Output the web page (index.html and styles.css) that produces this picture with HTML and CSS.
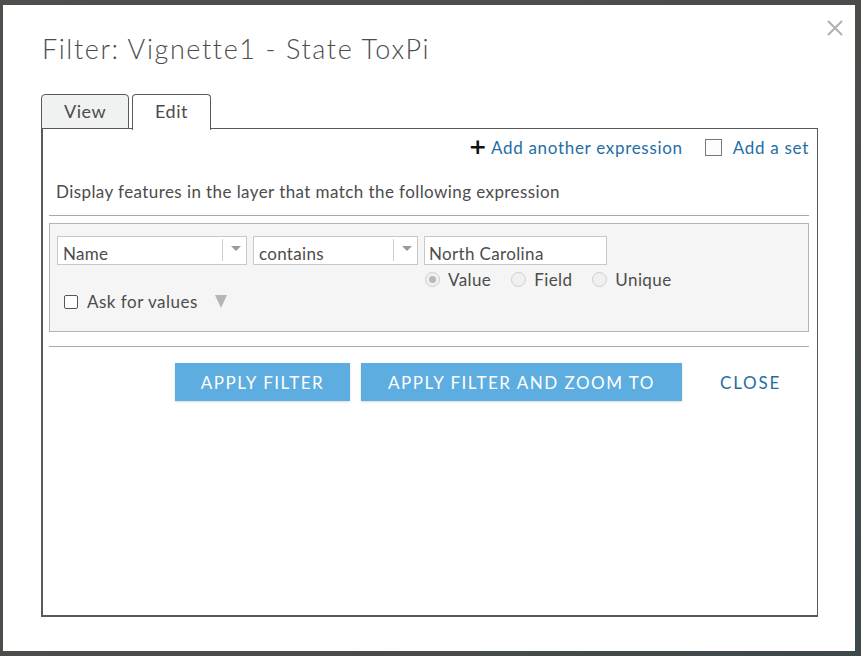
FILE: index.html
```html
<!DOCTYPE html>
<html>
<head>
<meta charset="utf-8">
<link rel="stylesheet" href="styles.css">
</head>
<body>
<div class="dialog">
  <svg class="close-x" width="16" height="16" viewBox="0 0 16 16"><path d="M1 1 L15 15 M15 1 L1 15" stroke="#b0b0b0" stroke-width="2" fill="none"/></svg>
  <h1 class="title">Filter: Vignette1 - State ToxPi</h1>
  <div class="tabs">
    <div class="tab tab-view">View</div>
    <div class="tab tab-edit">Edit</div>
  </div>
  <div class="panel">
    <div class="toolbar">
      <span class="add-expr"><span class="plus">+</span>Add another expression</span>
      <span class="add-set"><span class="box"></span>Add a set</span>
    </div>
    <div class="desc">Display features in the layer that match the following expression</div>
    <div class="rule"></div>
    <div class="expr">
      <div class="expr-row">
        <div class="select sel-name"><span class="sel-text">Name</span><span class="sel-div"></span><span class="sel-arrow"></span></div>
        <div class="select sel-op"><span class="sel-text">contains</span><span class="sel-div"></span><span class="sel-arrow"></span></div>
        <div class="value-col">
          <div class="text-input">North Carolina</div>
          <div class="radios">
            <span class="radio checked"><span class="dot"></span></span><span class="rlabel">Value</span>
            <span class="radio"></span><span class="rlabel">Field</span>
            <span class="radio"></span><span class="rlabel">Unique</span>
          </div>
        </div>
      </div>
      <div class="ask-row">
        <span class="cb"></span><span class="ask-label">Ask for values</span><span class="tri"></span>
      </div>
    </div>
    <div class="rule rule2"></div>
    <div class="buttons">
      <button class="btn btn1">APPLY FILTER</button>
      <button class="btn btn2">APPLY FILTER AND ZOOM TO</button>
      <span class="close-link">CLOSE</span>
    </div>
  </div>
</div>
</body>
</html>
```

FILE: styles.css
```css
html, body {
  margin: 0;
  padding: 0;
}
body {
  width: 861px;
  height: 656px;
  overflow: hidden;
  background: linear-gradient(135deg, #4f504c 0%, #4b4d49 60%, #3d484c 100%);
  font-family: "Lato", "Open Sans", sans-serif;
  color: #4c4c4c;
  padding: 5px 0 0 3px;
  box-sizing: border-box;
}
.dialog {
  position: relative;
  width: 852px;
  height: 646px;
  background: #fff;
  box-sizing: border-box;
  padding: 0 37px 0 38px;
  display: flex;
  flex-direction: column;
}
.close-x {
  position: absolute;
  right: 12px;
  top: 15px;
}
.title {
  margin: 26px 0 0 1px;
  font-size: 27px;
  font-weight: 300;
  line-height: 36px;
  color: #4c4c4c;
  letter-spacing: 1.6px;
}
.tabs {
  display: flex;
  gap: 3px;
  margin-top: 27px;
  height: 35px;
  position: relative;
  z-index: 2;
}
.tab {
  box-sizing: border-box;
  border: 1px solid #5a5a5a;
  border-bottom: none;
  border-radius: 4px 4px 0 0;
  font-size: 18px;
  line-height: 33px;
  text-align: center;
  color: #4c4c4c;
  letter-spacing: 0.5px;
}
.tab-view {
  width: 88px;
  background: #f0f2f1;
  border-bottom: 1px solid #5a5a5a;
}
.tab-edit {
  width: 79px;
  height: 36px;
  background: #fff;
}
.panel {
  height: 489px;
  box-sizing: border-box;
  border: 1px solid #5a5a5a;
  border-left-width: 2px;
  border-bottom-width: 2px;
  margin-top: -1px;
  padding: 0 8px 0 6px;
  display: flex;
  flex-direction: column;
}
.toolbar {
  display: flex;
  justify-content: flex-end;
  align-items: center;
  height: 36px;
  margin-top: 0;
  font-size: 17px;
  color: #1f6ea5;
  letter-spacing: 0.7px;
}
.add-expr {
  display: flex;
  align-items: center;
}
.plus {
  font-family: "DejaVu Sans", sans-serif;
  font-weight: bold;
  font-size: 22px;
  color: #111;
  margin-right: 4px;
  line-height: 20px;
  letter-spacing: 0;
}
.add-set {
  display: flex;
  align-items: center;
  margin-left: 22px;
}
.box {
  width: 17px;
  height: 17px;
  box-sizing: border-box;
  border: 1px solid #777;
  background: #fcfdfd;
  margin-right: 11px;
}
.desc {
  margin: 15px 0 0 7px;
  font-size: 17px;
  line-height: 24px;
  letter-spacing: 0.42px;
}
.rule {
  height: 1px;
  background: #a8a8a8;
  margin-top: 11px;
}
.expr {
  margin-top: 7px;
  height: 109px;
  box-sizing: border-box;
  background: #f4f5f4;
  border: 1px solid #b4b4b4;
  padding: 12px 7px 0 7px;
}
.expr-row {
  display: flex;
  gap: 6px;
  align-items: flex-start;
}
.select {
  position: relative;
  height: 29px;
  box-sizing: border-box;
  background: #fff;
  border: 1px solid #c8c8c8;
  font-size: 17px;
  letter-spacing: 0.3px;
}
.sel-name { width: 190px; }
.sel-op { width: 165px; }
.sel-text {
  position: absolute;
  left: 5px;
  top: 5px;
  line-height: 24px;
}
.sel-div {
  position: absolute;
  right: 23px;
  top: 2px;
  width: 1px;
  height: 22px;
  background: #cfcfcf;
}
.sel-arrow {
  position: absolute;
  right: 5px;
  top: 9px;
  width: 0;
  height: 0;
  border-left: 5px solid transparent;
  border-right: 5px solid transparent;
  border-top: 5px solid #9a9a9a;
}
.text-input {
  width: 183px;
  height: 29px;
  box-sizing: border-box;
  background: #fff;
  border: 1px solid #c8c8c8;
  font-size: 17px;
  padding: 5px 0 0 4px;
  line-height: 24px;
  letter-spacing: 0.35px;
}
.radios {
  display: flex;
  align-items: center;
  margin-top: 3px;
  margin-left: 1px;
  font-size: 17px;
  height: 22px;
  letter-spacing: 0.4px;
}
.radio {
  width: 15px;
  height: 15px;
  box-sizing: border-box;
  border-radius: 50%;
  border: 1px solid #cfcfcf;
  background: #f0f0f0;
  display: flex;
  align-items: center;
  justify-content: center;
}
.radio .dot {
  width: 7px;
  height: 7px;
  border-radius: 50%;
  background: #b8b8b8;
}
.rlabel {
  margin-left: 8px;
  margin-right: 20px;
}
.ask-row {
  display: flex;
  align-items: center;
  margin-top: 1px;
  margin-left: 7px;
  font-size: 17px;
  letter-spacing: 0.5px;
}
.cb {
  width: 14px;
  height: 14px;
  box-sizing: border-box;
  border: 1px solid #555;
  border-radius: 2px;
  background: #fff;
}
.ask-label {
  margin-left: 9px;
}
.tri {
  margin-left: 17px;
  width: 0;
  height: 0;
  border-left: 6px solid transparent;
  border-right: 6px solid transparent;
  border-top: 13px solid #b5b5b5;
}
.rule2 {
  margin-top: 14px;
}
.buttons {
  display: flex;
  align-items: center;
  margin-top: 16px;
  padding-left: 126px;
}
.btn {
  height: 38px;
  border: none;
  background: #5dade0;
  color: #fff;
  font-family: "Lato", "Open Sans", sans-serif;
  font-size: 17px;
  letter-spacing: 1.5px;
  box-shadow: 0 1px 2px rgba(0,0,0,0.15);
  padding: 0;
}
.btn1 { width: 175px; }
.btn2 { width: 321px; margin-left: 11px; }
.close-link {
  margin-left: 38px;
  color: #1f6ea5;
  font-size: 17px;
  letter-spacing: 1.8px;
}
```
